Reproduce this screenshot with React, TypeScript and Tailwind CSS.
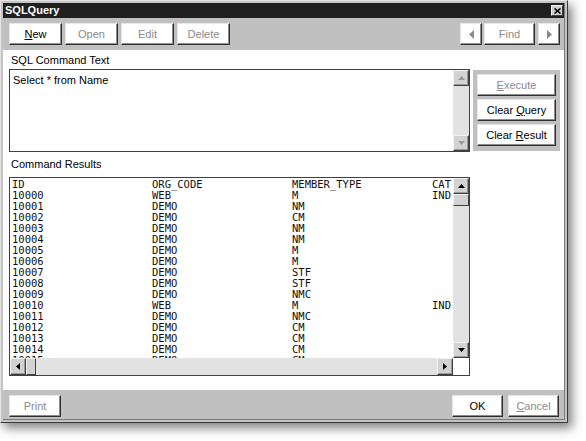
import React from 'react';

const ui = "font-['Liberation_Sans',Arial,sans-serif]";

function Btn({ w, disabled, children }: { w: string; disabled?: boolean; children: React.ReactNode }) {
  return (
    <div
      className={`${w} h-[22px] shrink-0 bg-white border border-t-[#e6e6e6] border-l-[#e6e6e6] border-r-[#303030] border-b-[#303030] shadow-[inset_-1px_-1px_0_#8c8c8c] flex items-center justify-center text-[11px] ${
        disabled ? 'text-[#8a8a8a]' : 'text-black'
      }`}
    >
      {children}
    </div>
  );
}

type Dir = 'up' | 'down' | 'left' | 'right';

function Arrow({ dir, color, big }: { dir: Dir; color: string; big?: boolean }) {
  const vertical = dir === 'up' || dir === 'down';
  const a = big ? 5 : 4;
  const b = big ? 9 : 7;
  const pts: Record<Dir, string> = {
    up: `0,${a} ${b / 2},0 ${b},${a}`,
    down: `0,0 ${b},0 ${b / 2},${a}`,
    left: `${a},0 ${a},${b} 0,${b / 2}`,
    right: `0,0 0,${b} ${a},${b / 2}`,
  };
  const w = vertical ? b : a;
  const h = vertical ? a : b;
  return (
    <svg width={w} height={h} viewBox={`0 0 ${w} ${h}`}>
      <polygon points={pts[dir]} fill={color} />
    </svg>
  );
}

function ScrollBtn({ dir, color, className = '' }: { dir: Dir; color: string; className?: string }) {
  return (
    <div
      className={`w-[16px] h-[16px] shrink-0 bg-[#d2d2d2] border border-t-[#f4f4f4] border-l-[#f4f4f4] border-r-[#404040] border-b-[#404040] shadow-[inset_-1px_-1px_0_#9a9a9a] flex items-center justify-center ${className}`}
    >
      <Arrow dir={dir} color={color} />
    </div>
  );
}

const rows: string[][] = [
  ['ID', 'ORG_CODE', 'MEMBER_TYPE', 'CAT'],
  ['10000', 'WEB', 'M', 'IND'],
  ['10001', 'DEMO', 'NM', ''],
  ['10002', 'DEMO', 'CM', ''],
  ['10003', 'DEMO', 'NM', ''],
  ['10004', 'DEMO', 'NM', ''],
  ['10005', 'DEMO', 'M', ''],
  ['10006', 'DEMO', 'M', ''],
  ['10007', 'DEMO', 'STF', ''],
  ['10008', 'DEMO', 'STF', ''],
  ['10009', 'DEMO', 'NMC', ''],
  ['10010', 'WEB', 'M', 'IND'],
  ['10011', 'DEMO', 'NMC', ''],
  ['10012', 'DEMO', 'CM', ''],
  ['10013', 'DEMO', 'CM', ''],
  ['10014', 'DEMO', 'CM', ''],
  ['10015', 'DEMO', 'CM', ''],
];

export default function App() {
  return (
    <div className={`w-[586px] h-[441px] bg-white ${ui}`}>
      <div className="w-[568px] h-[423px] bg-[#c4c4c4] border border-t-[#e4e4e4] border-l-[#e4e4e4] border-r-[#3a3a3a] border-b-[#3a3a3a] p-[2px] shadow-[4px_5px_10px_rgba(0,0,0,0.5)]">
        <div className="h-full flex flex-col border-r border-b border-r-[#7a7a7a] border-b-[#7a7a7a]">
          {/* title bar */}
          <div className="h-[15px] bg-[#202020] flex items-center justify-between pl-[2px] pr-[1px]">
            <span className="text-white font-bold text-[11px] leading-none">SQLQuery</span>
            <div className="w-[12px] h-[11px] bg-[#cfcfcf] border border-t-[#f4f4f4] border-l-[#f4f4f4] border-r-[#404040] border-b-[#404040] flex items-center justify-center">
              <svg width="7" height="6" viewBox="0 0 7 6">
                <path d="M0.5 0.5 L6.5 5.5 M6.5 0.5 L0.5 5.5" stroke="#000" strokeWidth="1.6" />
              </svg>
            </div>
          </div>

          {/* toolbar */}
          <div className="h-[32px] bg-[#c0c0c0] flex items-center justify-between pl-[6px] pr-[4px]">
            <div className="flex gap-[3px]">
              <Btn w="w-[53px]">
                <span><span className="underline">N</span>ew</span>
              </Btn>
              <Btn w="w-[53px]" disabled>Open</Btn>
              <Btn w="w-[53px]" disabled>Edit</Btn>
              <Btn w="w-[53px]" disabled>Delete</Btn>
            </div>
            <div className="flex">
              <Btn w="w-[22px]" disabled>
                <Arrow dir="left" color="#8a8a8a" big />
              </Btn>
              <div className="w-[2px]" />
              <Btn w="w-[51px]" disabled>Find</Btn>
              <div className="w-[3px]" />
              <Btn w="w-[22px]" disabled>
                <Arrow dir="right" color="#8a8a8a" big />
              </Btn>
            </div>
          </div>

          {/* white work area */}
          <div className="h-[340px] bg-white pl-[6px] pt-[3px]">
            <div className="h-[15px] leading-[15px] text-[11px] pl-[2px] text-black">SQL Command Text</div>
            <div className="mt-[1px] flex items-center gap-[3px]">
              <div className="w-[461px] h-[83px] border border-[#404040] flex">
                <div className="flex-1 pl-[3px] pt-[4px] text-[11px] leading-[13px] text-black">Select * from Name</div>
                <div className="w-[16px] bg-[#e2e2e2] flex flex-col justify-between">
                  <ScrollBtn dir="up" color="#9a9a9a" />
                  <ScrollBtn dir="down" color="#9a9a9a" />
                </div>
              </div>
              <div className="w-[87px] h-[81px] bg-[#c0c0c0] p-[4px] flex flex-col gap-[3px]">
                <Btn w="w-[79px]" disabled>
                  <span><span className="underline">E</span>xecute</span>
                </Btn>
                <Btn w="w-[79px]">
                  <span>Clear <span className="underline">Q</span>uery</span>
                </Btn>
                <Btn w="w-[79px]">
                  <span>Clear <span className="underline">R</span>esult</span>
                </Btn>
              </div>
            </div>

            <div className="h-[25px] flex items-center text-[11px] pl-[2px] text-black">Command Results</div>

            <div className="w-[461px] h-[199px] border border-[#404040] flex flex-col">
              <div className="flex h-[180px]">
                <div className="flex-1 overflow-hidden pt-[1px] pl-[2px] font-['DejaVu_Sans_Mono',monospace] text-[10.5px] text-[#111]">
                  {rows.map((r, i) => (
                    <div key={i} className="flex h-[11px] leading-[11px] whitespace-nowrap">
                      <span className="w-[140px] shrink-0">{r[0]}</span>
                      <span className="w-[140px] shrink-0">{r[1]}</span>
                      <span className="w-[140px] shrink-0">{r[2]}</span>
                      <span className="shrink-0">{r[3]}</span>
                    </div>
                  ))}
                </div>
                <div className="w-[16px] bg-[#e2e2e2] flex flex-col">
                  <ScrollBtn dir="up" color="#000" />
                  <div className="w-[16px] h-[12px] bg-[#d2d2d2] border border-t-[#f4f4f4] border-l-[#f4f4f4] border-r-[#404040] border-b-[#404040]" />
                  <div className="flex-1" />
                  <ScrollBtn dir="down" color="#000" />
                </div>
              </div>
              <div className="flex h-[17px]">
                <div className="flex-1 bg-[#e2e2e2] flex items-center">
                  <ScrollBtn dir="left" color="#000" className="h-[17px]" />
                  <div className="w-[10px] h-[17px] bg-[#d2d2d2] border border-t-[#f4f4f4] border-l-[#f4f4f4] border-r-[#404040] border-b-[#404040]" />
                  <div className="flex-1" />
                  <ScrollBtn dir="right" color="#000" className="h-[17px]" />
                </div>
                <div className="w-[16px] bg-white" />
              </div>
            </div>
          </div>

          {/* bottom bar */}
          <div className="flex-1 bg-[#c0c0c0] flex justify-between pl-[6px] pr-[5px] pt-[5px]">
            <Btn w="w-[52px]" disabled>Print</Btn>
            <div className="flex gap-[5px]">
              <Btn w="w-[51px]">OK</Btn>
              <Btn w="w-[51px]" disabled>
                <span><span className="underline">C</span>ancel</span>
              </Btn>
            </div>
          </div>
        </div>
      </div>
    </div>
  );
}
